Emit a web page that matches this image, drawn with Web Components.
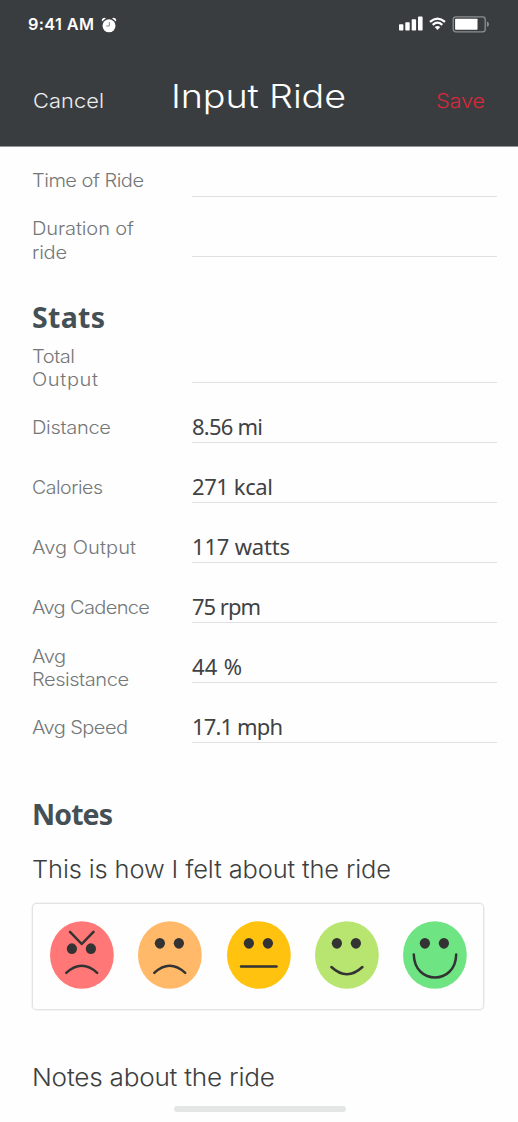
<!DOCTYPE html>
<html lang="en">
<head>
<meta charset="utf-8">
<title>Input Ride</title>
<style>
    body {
        margin: 0;
        background: #fefefe;
        font-family: Inter, "Liberation Sans", sans-serif;
    }
</style>
</head>
<body>
<ride-screen></ride-screen>

<script>
// Text set to an exact width: glyphs are widened by the stretch attribute,
// letter spacing takes up the rest.
class TrackedText extends HTMLElement {
    constructor() {
        super();
        this.attachShadow({ mode: 'open' });
        this.shadowRoot.innerHTML = `
            <style>
                :host { display: block; white-space: nowrap; }
                span { display: inline-block; transform-origin: 0 50%; }
            </style>
            <span><slot></slot></span>
        `;
    }

    connectedCallback() {
        const width = parseFloat(this.getAttribute('width'));
        const stretch = parseFloat(this.getAttribute('stretch')) || 1;
        const length = this.textContent.length;
        if (!width || length < 2) return;
        const span = this.shadowRoot.querySelector('span');
        const natural = span.getBoundingClientRect().width;
        this.style.width = `${width}px`;
        this.style.letterSpacing = `${((width / stretch - natural) / (length - 1)).toFixed(3)}px`;
        if (stretch !== 1) span.style.transform = `scaleX(${stretch})`;
    }
}

class StatusBar extends HTMLElement {
    constructor() {
        super();
        this.attachShadow({ mode: 'open' });
        this.shadowRoot.innerHTML = `
            <style>
                :host {
                    display: flex;
                    align-items: center;
                    height: 48px;
                    padding: 0 29px 0 28px;
                    color: #fff;
                }
                .time { font-size: 16.3px; font-weight: 600; line-height: 20px; }
                .alarm { margin: 1px auto 0 7px; }
                .signal { margin-right: 6px; }
                .wifi { margin-right: 6px; }
                svg { display: block; }
            </style>
            <tracked-text class="time" width="66">9:41 AM</tracked-text>
            <svg class="alarm" width="16" height="16" viewBox="0 0 16 16" fill="#fff">
                <circle cx="8" cy="8.8" r="6.5"/>
                <path d="M1 4.4 A2.6 2.6 0 0 1 5 1.3 Z M15 4.4 A2.6 2.6 0 0 0 11 1.3 Z"/>
                <path d="M8.3 5 V9 H5.2" fill="none" stroke="#85888a" stroke-width="1"/>
            </svg>
            <svg class="signal" width="24" height="16" viewBox="0 0 24 16" fill="#fff">
                <rect x="0" y="8.3" width="4.4" height="6.3" rx=".8"/>
                <rect x="6.3" y="6.2" width="4.4" height="8.4" rx=".8"/>
                <rect x="12.7" y="3.3" width="4.4" height="11.3" rx=".8"/>
                <rect x="19" y=".6" width="4.6" height="14" rx=".8"/>
            </svg>
            <svg class="wifi" width="17" height="14" viewBox="0 0 17 14" fill="none" stroke="#fff" stroke-width="2.2">
                <path d="M1 4.8 Q8.5 -1.7 16 4.8"/>
                <path d="M3.7 7.8 Q8.5 3.6 13.3 7.8"/>
                <path d="M8.5 12.9 L5.7 10.1 Q8.5 7.7 11.3 10.1 Z" fill="#fff" stroke="none"/>
            </svg>
            <svg width="37" height="17" viewBox="0 0 37 17">
                <rect x="1.2" y=".8" width="32" height="15" rx="2.6" fill="none" stroke="#8c8f90" stroke-width="1.3"/>
                <rect x="3.1" y="2.7" width="22.4" height="11" rx=".6" fill="#fff"/>
                <path d="M34.9 5.6 Q37 6.1 37 8.2 Q37 10.3 34.9 10.8 Z" fill="#8c8f90"/>
            </svg>
        `;
    }
}

class NavHeader extends HTMLElement {
    constructor() {
        super();
        this.attachShadow({ mode: 'open' });
        this.shadowRoot.innerHTML = `
            <style>
                :host {
                    display: block;
                    box-sizing: border-box;
                    height: 147px;
                    background: #3a3d40;
                    border-bottom: 1px solid #939596;
                    color: #fff;
                    font-weight: 300;
                }
                nav {
                    display: flex;
                    align-items: baseline;
                    padding: 27px 0 0 33px;
                }
                .cancel, .save { font-size: 20px; line-height: 26px; }
                .title { margin: 0 90px 0 67px; font-size: 32.5px; line-height: 44px; }
                .cancel { color: #eceded; }
                .save { color: #d8283a; }
            </style>
            <status-bar></status-bar>
            <nav>
                <tracked-text class="cancel" width="71" stretch="1.09">Cancel</tracked-text>
                <tracked-text class="title" width="175" stretch="1.16">Input Ride</tracked-text>
                <tracked-text class="save" width="49" stretch="1.09">Save</tracked-text>
            </nav>
        `;
    }
}

class SectionHeading extends HTMLElement {
    constructor() {
        super();
        this.attachShadow({ mode: 'open' });
        this.shadowRoot.innerHTML = `
            <style>
                :host {
                    display: block;
                    font: 700 28.5px/40px "Noto Sans", sans-serif;
                    color: #445055;
                }
            </style>
            <slot></slot>
        `;
    }
}

class RideField extends HTMLElement {
    constructor() {
        super();
        this.attachShadow({ mode: 'open' });
        this.shadowRoot.innerHTML = `
            <style>
                :host {
                    display: grid;
                    grid-template-columns: 160px 305px;
                    align-items: center;
                    height: 60px;
                }
                .label {
                    font-size: 18.4px;
                    font-weight: 300;
                    line-height: 23.4px;
                    color: #747778;
                    padding-bottom: var(--label-lift, 0);
                }
                .value {
                    box-sizing: border-box;
                    height: 30px;
                    border-bottom: 1px solid #e0e1e1;
                    font: 400 22px/26px "Noto Sans", sans-serif;
                    color: #3f4244;
                }
            </style>
            <div class="label"><slot name="label"></slot></div>
            <div class="value"><slot></slot></div>
        `;
    }
}

const MOODS = {
    angry: {
        fill: '#ff7777',
        eyes: 27.7,
        path: 'M20 10.8 L31.7 23 L43.5 10.8 M16.3 51.8 Q31.7 37.6 47.2 51.8'
    },
    sad: { fill: '#ffb969', eyes: 22.3, path: 'M16.3 51.8 Q31.7 37.6 47.2 51.8' },
    neutral: { fill: '#ffc20e', eyes: 22.3, path: 'M14 45.5 H49.5' },
    happy: { fill: '#b8e470', eyes: 22.3, path: 'M16.4 46 Q31.9 60.4 47.4 46' },
    great: { fill: '#6fe483', eyes: 22.3, path: 'M10.8 33.5 C11.4 64.2 52.6 64.2 53.2 33.5' }
};

class MoodFace extends HTMLElement {
    constructor() {
        super();
        this.attachShadow({ mode: 'open' });
    }

    connectedCallback() {
        const mood = MOODS[this.getAttribute('mood')];
        this.shadowRoot.innerHTML = `
            <style>
                :host { display: block; }
                svg { display: block; }
            </style>
            <svg width="64" height="68" viewBox="0 0 64 68">
                <ellipse cx="31.9" cy="34" rx="31.9" ry="33.8" fill="${mood.fill}"/>
                <ellipse cx="21.9" cy="${mood.eyes}" rx="5.1" ry="5.4" fill="#333"/>
                <ellipse cx="40.9" cy="${mood.eyes}" rx="5.1" ry="5.4" fill="#333"/>
                <path d="${mood.path}" fill="none" stroke="#333" stroke-width="2.5" stroke-linecap="round" stroke-linejoin="round"/>
            </svg>
        `;
    }
}

class MoodPicker extends HTMLElement {
    constructor() {
        super();
        this.attachShadow({ mode: 'open' });
        this.shadowRoot.innerHTML = `
            <style>
                :host {
                    display: flex;
                    justify-content: space-between;
                    box-sizing: border-box;
                    width: 452px;
                    height: 107px;
                    padding: 17.4px 15.6px 0 16.8px;
                    border: 1px solid #e2e3e3;
                    border-radius: 4px;
                    box-shadow: 0 0 0 .4px #e8e8e8;
                }
            </style>
            ${Object.keys(MOODS).map(mood => `<mood-face mood="${mood}"></mood-face>`).join('')}
        `;
    }
}

class RideScreen extends HTMLElement {
    constructor() {
        super();
        this.attachShadow({ mode: 'open' });
        this.shadowRoot.innerHTML = `
            <style>
                :host {
                    display: flex;
                    flex-direction: column;
                    height: 1122px;
                    overflow: hidden;
                }
                main { padding: 5px 0 0 32px; flex: 1; }
                .times { --label-lift: 3px; }
                .stats { margin-top: 25px; height: 41px; }
                .notes { margin-top: 36px; }
                .prompt {
                    font-size: 24px;
                    font-weight: 300;
                    line-height: 30px;
                    color: #3d3f40;
                }
                .felt { margin: 21px 0 18px; }
                .about { margin-top: 53px; }
                .home {
                    width: 172px;
                    height: 6px;
                    margin: 0 auto 10px 174px;
                    border-radius: 3px;
                    background: #e4e5e5;
                }
            </style>
            <nav-header></nav-header>
            <main>
                <div class="times">
                    <ride-field><tracked-text slot="label" width="112" stretch="1.09">Time of Ride</tracked-text></ride-field>
                    <ride-field>
                        <tracked-text slot="label" width="102" stretch="1.09">Duration of</tracked-text>
                        <tracked-text slot="label" width="35" stretch="1.09">ride</tracked-text>
                    </ride-field>
                </div>
                <section-heading class="stats"><tracked-text width="73">Stats</tracked-text></section-heading>
                <ride-field>
                    <tracked-text slot="label" width="43" stretch="1.09">Total</tracked-text>
                    <tracked-text slot="label" width="66" stretch="1.09">Output</tracked-text>
                </ride-field>
                <ride-field><tracked-text slot="label" width="79" stretch="1.09">Distance</tracked-text><tracked-text width="71">8.56 mi</tracked-text></ride-field>
                <ride-field><tracked-text slot="label" width="71" stretch="1.06">Calories</tracked-text><tracked-text width="81">271 kcal</tracked-text></ride-field>
                <ride-field><tracked-text slot="label" width="104" stretch="1.09">Avg Output</tracked-text><tracked-text width="98">117 watts</tracked-text></ride-field>
                <ride-field><tracked-text slot="label" width="118" stretch="1.09">Avg Cadence</tracked-text><tracked-text width="69">75 rpm</tracked-text></ride-field>
                <ride-field>
                    <tracked-text slot="label" width="34" stretch="1.09">Avg</tracked-text>
                    <tracked-text slot="label" width="97" stretch="1.09">Resistance</tracked-text>
                    <tracked-text width="50">44 %</tracked-text>
                </ride-field>
                <ride-field><tracked-text slot="label" width="96" stretch="1.09">Avg Speed</tracked-text><tracked-text width="91">17.1 mph</tracked-text></ride-field>
                <section-heading class="notes"><tracked-text width="81">Notes</tracked-text></section-heading>
                <tracked-text class="prompt felt" width="359" stretch="1.06">This is how I felt about the ride</tracked-text>
                <mood-picker></mood-picker>
                <tracked-text class="prompt about" width="243" stretch="1.09">Notes about the ride</tracked-text>
            </main>
            <div class="home"></div>
        `;
    }
}

customElements.define('tracked-text', TrackedText);
customElements.define('status-bar', StatusBar);
customElements.define('nav-header', NavHeader);
customElements.define('section-heading', SectionHeading);
customElements.define('ride-field', RideField);
customElements.define('mood-face', MoodFace);
customElements.define('mood-picker', MoodPicker);
customElements.define('ride-screen', RideScreen);
</script>
</body>
</html>
